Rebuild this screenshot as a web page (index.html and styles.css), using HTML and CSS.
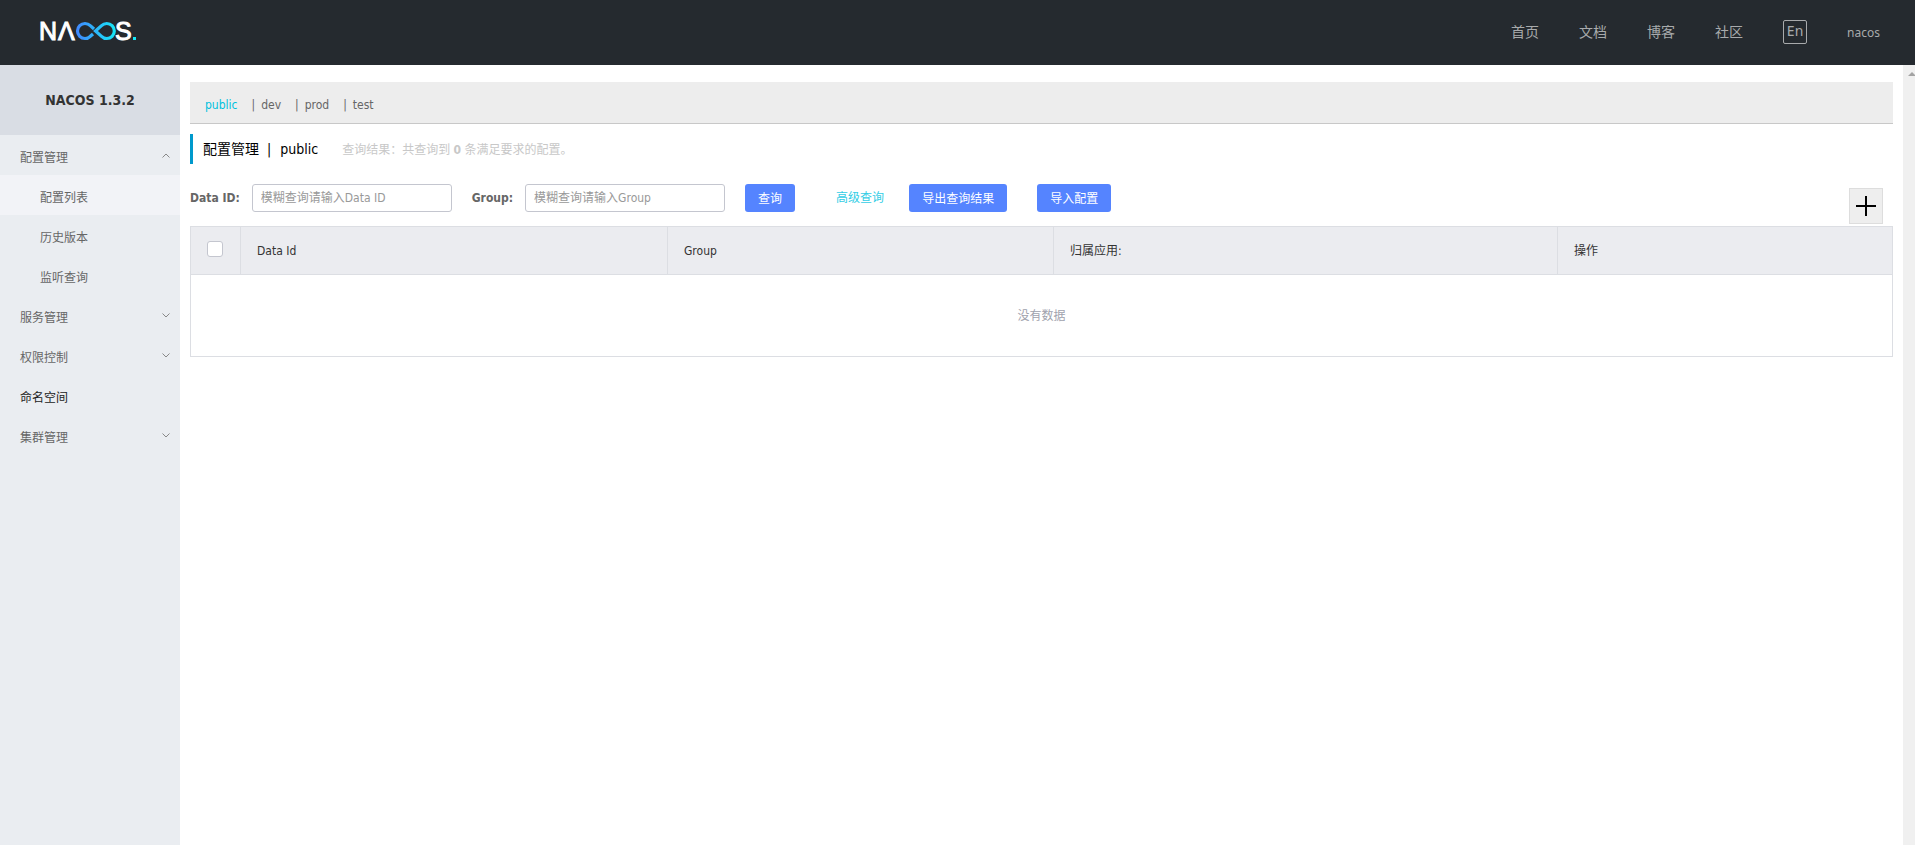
FILE: index.html
```html
<!DOCTYPE html>
<html lang="zh-CN">
<head>
  <meta charset="UTF-8">
  <title>Nacos</title>
  <link rel="stylesheet" href="styles.css">
</head>
<body>
  <header class="header">
    <a href="#" class="logo" aria-label="Nacos">
      <svg width="104" height="40" viewBox="-4 -10 104 40">
        <defs>
          <linearGradient id="loop" gradientUnits="userSpaceOnUse" x1="36" y1="0" x2="76" y2="0">
            <stop offset="0" stop-color="#4287ff"/>
            <stop offset="1" stop-color="#14e8f6"/>
          </linearGradient>
        </defs>
        <g class="logo-text">
          <text x="-1" y="18">N</text>
          <text x="18" y="18">Λ</text>
          <text x="75" y="18">S</text>
        </g>
        <g fill="none" stroke="url(#loop)" stroke-width="3.200">
          <path d="M54 7 L50.300 3.700 A7.500 7.500 0 1 0 50.300 14.300 L53 12"/>
          <path d="M55.500 9 L61.500 3.700 A7.500 7.500 0 1 1 61.500 14.300 Z"/>
        </g>
        <rect x="93" y="15" width="3" height="3" fill="#14e8f6"/>
      </svg>
    </a>
    <nav class="nav">
      <a href="#">首页</a>
      <a href="#">文档</a>
      <a href="#">博客</a>
      <a href="#">社区</a>
      <button type="button" class="lang">En</button>
      <a href="#" class="user">nacos</a>
    </nav>
  </header>

  <div class="layout">
    <aside class="sidebar">
      <h1 class="version">NACOS 1.3.2</h1>
      <ul class="menu">
        <li><a href="#">配置管理<svg class="arrow" viewBox="0 0 8 5"><path d="M0.500 4.500 L4 1 L7.500 4.500"/></svg></a></li>
        <li><a href="#" class="sub active">配置列表</a></li>
        <li><a href="#" class="sub">历史版本</a></li>
        <li><a href="#" class="sub">监听查询</a></li>
        <li><a href="#">服务管理<svg class="arrow" viewBox="0 0 8 5"><path d="M0.500 0.500 L4 4 L7.500 0.500"/></svg></a></li>
        <li><a href="#">权限控制<svg class="arrow" viewBox="0 0 8 5"><path d="M0.500 0.500 L4 4 L7.500 0.500"/></svg></a></li>
        <li><a href="#" class="single">命名空间</a></li>
        <li><a href="#">集群管理<svg class="arrow" viewBox="0 0 8 5"><path d="M0.500 0.500 L4 4 L7.500 0.500"/></svg></a></li>
      </ul>
    </aside>

    <main class="content">
      <div class="namespaces">
        <a href="#" class="current">public</a>
        <span class="bar">|</span><a href="#">dev</a>
        <span class="bar">|</span><a href="#">prod</a>
        <span class="bar">|</span><a href="#">test</a>
      </div>

      <div class="page-title">
        <h2>配置管理<span class="split">|</span>public</h2>
        <p>查询结果：共查询到 <strong>0</strong> 条满足要求的配置。</p>
      </div>

      <form class="search">
        <label for="dataId">Data ID:</label>
        <input type="text" id="dataId" placeholder="模糊查询请输入Data ID">
        <label for="group">Group:</label>
        <input type="text" id="group" placeholder="模糊查询请输入Group">
        <button type="button" class="btn">查询</button>
        <a href="#" class="advanced">高级查询</a>
        <button type="button" class="btn export">导出查询结果</button>
        <button type="button" class="btn">导入配置</button>
        <button type="button" class="add" aria-label="新建配置">
          <svg width="20" height="20" viewBox="0 0 20 20"><path d="M0 10 H20 M10 0 V20"/></svg>
        </button>
      </form>

      <table class="configs">
        <colgroup>
          <col class="col-check">
          <col class="col-id">
          <col class="col-group">
          <col class="col-app">
          <col class="col-action">
        </colgroup>
        <thead>
          <tr>
            <th><input type="checkbox" aria-label="全选"></th>
            <th>Data Id</th>
            <th>Group</th>
            <th>归属应用:</th>
            <th>操作</th>
          </tr>
        </thead>
        <tbody>
          <tr><td colspan="5">没有数据</td></tr>
        </tbody>
      </table>
    </main>

    <div class="scroll-track">
      <svg width="8" height="4" viewBox="0 0 8 4"><path d="M0 4 L4 0 L8 4 Z"/></svg>
    </div>
  </div>
</body>
</html>
```

FILE: styles.css
```css
* {
  box-sizing: border-box;
}
body {
  margin: 0;
  min-height: 100vh;
  display: flex;
  flex-direction: column;
  font-family: "DejaVu Sans Condensed", "Noto Sans CJK SC", sans-serif;
  font-size: 12px;
  line-height: 20px;
  color: #333;
  background: #fff;
}
a {
  color: inherit;
  text-decoration: none;
}
button, input {
  font-family: inherit;
  font-size: 12px;
}

/* header */
.header {
  display: flex;
  align-items: center;
  justify-content: space-between;
  height: 65px;
  padding: 0 35px 2px 36px;
  background: #252a2f;
}
.logo svg {
  display: block;
}
.logo-text {
  font-family: "Liberation Sans", sans-serif;
  font-size: 25px;
  fill: #fff;
  stroke: #fff;
  stroke-width: 1px;
}
.nav {
  display: flex;
  align-items: center;
  gap: 40px;
  font-family: "Noto Sans", "Noto Sans CJK SC", sans-serif;
  font-size: 14px;
  color: #a8aaac;
}
.lang {
  width: 24px;
  height: 24px;
  padding: 0 0 2px;
  border: 1px solid #a8aaac;
  border-radius: 2px;
  background: none;
  color: #a8aaac;
  font-size: 14px;
  line-height: 20px;
}
.user {
  padding-top: 2px;
  font-size: 12px;
}

/* sidebar */
.layout {
  display: flex;
  flex: 1;
}
.sidebar {
  width: 180px;
  background: #eaedf1;
}
.version {
  margin: 0;
  font-size: 14px;
  line-height: 70px;
  text-align: center;
  background: #d9dde4;
}
.menu {
  margin: 0;
  padding: 0;
  list-style: none;
}
.menu a {
  display: flex;
  align-items: center;
  justify-content: space-between;
  height: 40px;
  padding: 6px 10px 0 20px;
  color: #666;
}
.menu .sub {
  padding-left: 40px;
}
.menu .active {
  background: #f2f3f7;
}
.menu .single {
  color: #222;
}
.arrow {
  width: 8px;
  height: 5px;
  margin-bottom: 6px;
  fill: none;
  stroke: #888;
}

/* content */
.content {
  flex: 1;
  padding: 17px 10px;
}
.namespaces {
  display: flex;
  height: 42px;
  padding: 13px 15px 0;
  border-bottom: 1px solid #c8c8c8;
  background: #ededed;
  color: #666;
}
.namespaces .current {
  color: #00c1de;
}
.namespaces .bar {
  margin: 0 6px 0 14px;
}
.page-title {
  display: flex;
  align-items: center;
  gap: 24px;
  height: 30px;
  margin: 10px 0 20px;
  padding-left: 10px;
  border-left: 3px solid #09c;
}
.page-title h2 {
  margin: 0;
  font-size: 14px;
  font-weight: normal;
  color: #000;
}
.split {
  margin: 0 9px 0 8px;
}
.page-title p {
  margin: 0;
  padding-top: 2px;
  color: #c8c8c8;
}
.search {
  display: flex;
  align-items: center;
  height: 42px;
  padding-bottom: 14px;
}
.search label {
  margin-right: 12px;
  font-weight: bold;
  color: #666;
}
.search input {
  width: 200px;
  height: 28px;
  margin-right: 20px;
  padding: 0 8px;
  border: 1px solid #c4c6cf;
  border-radius: 3px;
}
.search input::placeholder {
  color: #999;
}
.btn {
  height: 28px;
  padding: 0 13px 2px;
  border: none;
  border-radius: 3px;
  background: #5584ff;
  color: #fff;
}
.advanced {
  margin: 0 25px 0 41px;
  color: #33cde5;
}
.export {
  margin-right: 30px;
}
.add {
  display: flex;
  align-items: center;
  justify-content: center;
  align-self: flex-start;
  width: 34px;
  height: 36px;
  margin: 4px 10px 0 auto;
  padding: 0;
  border: 1px solid #ddd;
  background: #eee;
}
.add path {
  stroke: #000;
  stroke-width: 2;
}

/* table */
.configs {
  width: 100%;
  table-layout: fixed;
  border-collapse: collapse;
  border: 1px solid #dcdee3;
}
.col-check {
  width: 50px;
}
.col-id {
  width: 427px;
}
.col-group {
  width: 386px;
}
.col-app {
  width: 504px;
}
.configs th {
  height: 48px;
  padding: 0 16px;
  border: 1px solid #dcdee3;
  background: #ebecf0;
  font-weight: normal;
  text-align: left;
}
.configs th input {
  appearance: none;
  display: block;
  width: 16px;
  height: 16px;
  margin: 0 0 3px;
  border: 1px solid #c4c6cf;
  border-radius: 3px;
  background: #fff;
}
.configs td {
  height: 82px;
  text-align: center;
  color: #a0a2ad;
}

.scroll-track {
  width: 12px;
  padding: 7px 0 0 5px;
  overflow: hidden;
  background: #f0f0f0;
}
.scroll-track svg {
  display: block;
  fill: #a3a3a3;
}
```
